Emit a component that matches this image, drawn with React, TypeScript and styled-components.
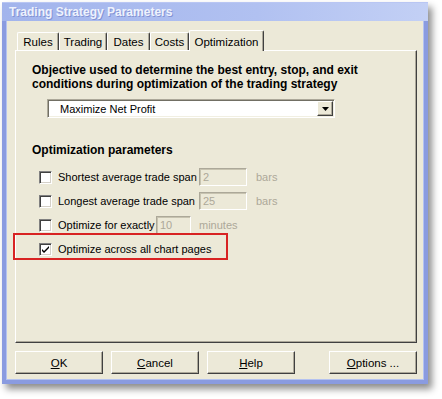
import React from "react";
import styled, { createGlobalStyle } from "styled-components";

const Global = createGlobalStyle`
  html, body { margin: 0; padding: 0; background: #ffffff; }
  body {
    font-family: "Liberation Sans", Arial, sans-serif;
    font-size: 11px;
    color: #000;
  }
`;

const Stage = styled.div`
  width: 442px;
  height: 399px;
  padding: 2px 0 0 2px;
  box-sizing: border-box;
`;

const Window = styled.div`
  width: 426px;
  height: 382px;
  display: flex;
  flex-direction: column;
  box-shadow: 4px 5px 7px rgba(0, 0, 0, 0.45);
`;

const TitleBar = styled.div`
  height: 19px;
  flex: none;
  background: linear-gradient(90deg, #a2b4ec 0%, #b1c1f1 60%, #c3d0f5 100%);
  border-top: 1px solid #b9c6f3;
  box-sizing: border-box;
  padding-left: 7px;
  display: flex;
  align-items: center;
`;

const Title = styled.span`
  font-family: "Liberation Sans", Arial, sans-serif;
  font-weight: bold;
  font-size: 12px;
  color: #eef2fd;
  text-shadow: 1px 1px 0 #8393d4;
`;

const Body = styled.div`
  flex: 1;
  background: #ece9d8;
  border: 4px solid #8a9be0;
  border-top: none;
  box-shadow: inset 1px 0 0 #b4c2f0, inset -1px 0 0 #b4c2f0, inset 0 -1px 0 #b4c2f0;
  padding: 9px 7px 6px 9px;
  display: flex;
  flex-direction: column;
`;

const TabRow = styled.div`
  height: 20px;
  display: flex;
  align-items: flex-end;
  padding-left: 2px;
  position: relative;
  z-index: 1;
`;

const Tab = styled.div<{ $w: number; $active?: boolean }>`
  width: ${(p) => p.$w}px;
  height: ${(p) => (p.$active ? 21 : 18)}px;
  margin-bottom: ${(p) => (p.$active ? -1 : 0)}px;
  box-sizing: border-box;
  padding-top: ${(p) => (p.$active ? 4 : 2)}px;
  line-height: 15px;
  font-size: 11.5px;
  text-align: center;
  background: #ece9d8;
  border-top: 1px solid #ffffff;
  border-left: 1px solid #ffffff;
  border-right: 1px solid #404040;
  box-shadow: inset -1px 0 0 #aca899;
  border-radius: 2px 2px 0 0;
`;

const Panel = styled.div`
  height: 293px;
  box-sizing: border-box;
  border: 1px solid;
  border-color: #ffffff #404040 #404040 #ffffff;
  box-shadow: inset -1px -1px 0 #aca899;
  padding: 12px 0 0 16px;
`;

const Heading = styled.div<{ $top?: number }>`
  font-weight: bold;
  font-size: 12px;
  line-height: 14px;
  margin-top: ${(p) => p.$top ?? 0}px;
`;

const Combo = styled.div`
  margin: 8px 0 0 15px;
  width: 288px;
  height: 19px;
  box-sizing: border-box;
  background: #ffffff;
  border: 1px solid;
  border-color: #aca899 #ffffff #ffffff #aca899;
  box-shadow: inset 1px 1px 0 #716f64, inset -1px -1px 0 #f1efe2;
  display: flex;
  align-items: center;
  padding: 0 1px 0 12px;
`;

const ComboText = styled.span`
  flex: 1;
  line-height: 16px;
`;

const ComboButton = styled.div`
  width: 16px;
  height: 15px;
  box-sizing: border-box;
  background: #ece9d8;
  border: 1px solid;
  border-color: #ffffff #404040 #404040 #ffffff;
  box-shadow: inset -1px -1px 0 #aca899;
  display: flex;
  align-items: center;
  justify-content: center;
`;

const Rows = styled.div`
  margin-top: 8px;
  display: flex;
  flex-direction: column;
`;

const Row = styled.div`
  height: 24px;
  display: flex;
  align-items: center;
  padding-left: 7px;
  position: relative;
`;

const Box = styled.span`
  width: 13px;
  height: 13px;
  box-sizing: border-box;
  flex: none;
  background: #ffffff;
  border: 1px solid;
  border-color: #808080 #ffffff #ffffff #808080;
  box-shadow: inset 1px 1px 0 #404040, inset -1px -1px 0 #d4d0c8;
  display: flex;
  align-items: center;
  justify-content: center;
`;

const Label = styled.span<{ $w?: number }>`
  margin-left: 6px;
  width: ${(p) => (p.$w ? `${p.$w}px` : "auto")};
  flex: none;
  line-height: 16px;
  white-space: nowrap;
`;

const Field = styled.span<{ $w: number }>`
  width: ${(p) => p.$w}px;
  height: 18px;
  box-sizing: border-box;
  flex: none;
  border: 1px solid;
  border-color: #aca899 #ffffff #ffffff #aca899;
  box-shadow: inset 1px 1px 0 #c7c3b0;
  color: #aca899;
  padding-left: 3px;
  line-height: 16px;
`;

const Unit = styled.span<{ $gap: number }>`
  margin-left: ${(p) => p.$gap}px;
  color: #aca899;
  line-height: 16px;
`;

const Highlight = styled.div`
  position: absolute;
  left: -19px;
  top: -4px;
  width: 215px;
  height: 27px;
  box-sizing: border-box;
  border: 2px solid #d82323;
  pointer-events: none;
`;

const ButtonRow = styled.div`
  margin-top: 8px;
  height: 23px;
  display: flex;
  gap: 8px;
`;

const Button = styled.div<{ $push?: boolean }>`
  width: 88px;
  height: 23px;
  box-sizing: border-box;
  margin-left: ${(p) => (p.$push ? "auto" : "0")};
  background: #ece9d8;
  border: 1px solid;
  border-color: #ffffff #404040 #404040 #ffffff;
  box-shadow: inset -1px -1px 0 #aca899;
  display: flex;
  align-items: center;
  justify-content: center;
  line-height: 16px;
  font-size: 11.5px;
`;

const Check = () => (
  <svg width="9" height="9" viewBox="0 0 9 9">
    <path d="M1 4 L3 6 L8 1 L8 3 L3 8 L1 6 Z" fill="#000" />
  </svg>
);

const Arrow = () => (
  <svg width="7" height="4" viewBox="0 0 7 4">
    <path d="M0 0 H7 L3.5 4 Z" fill="#000" />
  </svg>
);

const tabs: { label: string; w: number; active?: boolean }[] = [
  { label: "Rules", w: 42 },
  { label: "Trading", w: 48 },
  { label: "Dates", w: 43 },
  { label: "Costs", w: 39 },
  { label: "Optimization", w: 75, active: true },
];

export default function App() {
  return (
    <>
      <Global />
      <Stage>
        <Window>
          <TitleBar>
            <Title>Trading Strategy Parameters</Title>
          </TitleBar>
          <Body>
            <TabRow>
              {tabs.map((t) => (
                <Tab key={t.label} $w={t.w} $active={t.active}>
                  {t.label}
                </Tab>
              ))}
            </TabRow>
            <Panel>
              <Heading>
                Objective used to determine the best entry, stop, and exit
                <br />
                conditions during optimization of the trading strategy
              </Heading>
              <Combo>
                <ComboText>Maximize Net Profit</ComboText>
                <ComboButton>
                  <Arrow />
                </ComboButton>
              </Combo>
              <Heading $top={25}>Optimization parameters</Heading>
              <Rows>
                <Row>
                  <Box />
                  <Label $w={141}>Shortest average trade span</Label>
                  <Field $w={48}>2</Field>
                  <Unit $gap={9}>bars</Unit>
                </Row>
                <Row>
                  <Box />
                  <Label $w={141}>Longest average trade span</Label>
                  <Field $w={48}>25</Field>
                  <Unit $gap={9}>bars</Unit>
                </Row>
                <Row>
                  <Box />
                  <Label $w={98}>Optimize for exactly</Label>
                  <Field $w={35}>10</Field>
                  <Unit $gap={8}>minutes</Unit>
                </Row>
                <Row>
                  <Box>
                    <Check />
                  </Box>
                  <Label>Optimize across all chart pages</Label>
                  <Highlight />
                </Row>
              </Rows>
            </Panel>
            <ButtonRow>
              <Button>
                <span><u>O</u>K</span>
              </Button>
              <Button>
                <span><u>C</u>ancel</span>
              </Button>
              <Button>
                <span><u>H</u>elp</span>
              </Button>
              <Button $push>
                <span><u>O</u>ptions ...</span>
              </Button>
            </ButtonRow>
          </Body>
        </Window>
      </Stage>
    </>
  );
}
